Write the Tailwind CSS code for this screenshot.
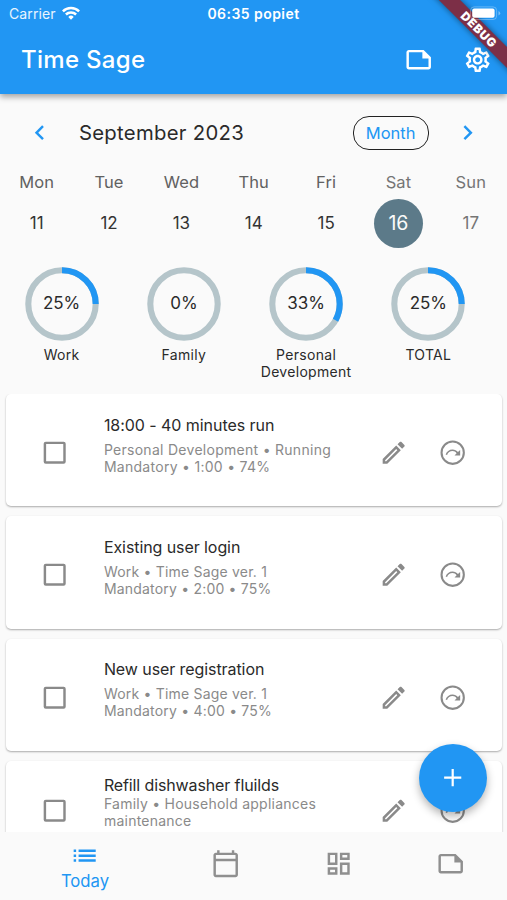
<!DOCTYPE html>
<html lang="en">
<head>
<meta charset="utf-8">
<title>Time Sage</title>
<script src="https://cdn.jsdelivr.net/npm/@tailwindcss/browser@4"></script>
</head>
<body class="bg-[#fafafa]">
<svg class="hidden">
  <symbol id="note" viewBox="0 0 24 24"><path d="M16 4H4c-1.1 0-2 .9-2 2v12.01c0 1.1.9 1.99 2 1.99h16c1.1 0 2-.9 2-2v-8l-6-6zM4 18.01V6h11v5h5v7.01H4z"/></symbol>
  <symbol id="gear" viewBox="0 0 24 24"><path d="M19.43 12.98c.04-.32.07-.64.07-.98 0-.34-.03-.66-.07-.98l2.11-1.65c.19-.15.24-.42.12-.64l-2-3.46c-.09-.16-.26-.25-.44-.25-.06 0-.12.01-.17.03l-2.49 1c-.52-.4-1.08-.73-1.69-.98l-.38-2.65C14.46 2.18 14.25 2 14 2h-4c-.25 0-.46.18-.49.42l-.38 2.65c-.61.25-1.17.59-1.69.98l-2.49-1c-.06-.02-.12-.03-.18-.03-.17 0-.34.09-.43.25l-2 3.46c-.13.22-.07.49.12.64l2.11 1.65c-.04.32-.07.65-.07.98 0 .33.03.66.07.98l-2.11 1.65c-.19.15-.24.42-.12.64l2 3.46c.09.16.26.25.44.25.06 0 .12-.01.17-.03l2.49-1c.52.4 1.08.73 1.69.98l.38 2.65c.03.24.24.42.49.42h4c.25 0 .46-.18.49-.42l.38-2.65c.61-.25 1.17-.59 1.69-.98l2.49 1c.06.02.12.03.18.03.17 0 .34-.09.43-.25l2-3.46c.12-.22.07-.49-.12-.64l-2.11-1.65zm-1.98-1.71c.04.31.05.52.05.73 0 .21-.02.43-.05.73l-.14 1.13.89.7 1.08.84-.7 1.21-1.27-.51-1.04-.42-.9.68c-.43.32-.84.56-1.25.73l-1.06.43-.16 1.13-.2 1.35h-1.4l-.19-1.35-.16-1.13-1.06-.43c-.43-.18-.83-.41-1.23-.71l-.91-.7-1.06.43-1.27.51-.7-1.21 1.08-.84.89-.7-.14-1.13c-.03-.31-.05-.54-.05-.74s.02-.43.05-.73l.14-1.13-.89-.7-1.08-.84.7-1.21 1.27.51 1.04.42.9-.68c.43-.32.84-.56 1.25-.73l1.06-.43.16-1.13.2-1.35h1.39l.19 1.35.16 1.13 1.06.43c.43.18.83.41 1.23.71l.91.7 1.06-.43 1.27-.51.7 1.21-1.07.85-.89.7.14 1.13zM12 8c-2.21 0-4 1.79-4 4s1.79 4 4 4 4-1.79 4-4-1.79-4-4-4zm0 6c-1.1 0-2-.9-2-2s.9-2 2-2 2 .9 2 2-.9 2-2 2z"/></symbol>
  <symbol id="pencil" viewBox="0 0 24 24"><path d="M14.06 9.02l.92.92L5.92 19H5v-.92l9.06-9.06M17.66 3c-.25 0-.51.1-.7.29l-1.83 1.83 3.75 3.75 1.83-1.83c.39-.39.39-1.02 0-1.41l-2.34-2.34c-.2-.2-.45-.29-.71-.29zm-3.6 3.19L3 17.25V21h3.75L17.81 9.94l-3.75-3.75z"/></symbol>
  <symbol id="box" viewBox="0 0 24 24"><rect x="4" y="4" width="16" height="16" rx=".7" fill="none" stroke="currentColor" stroke-width="2"/></symbol>
  <symbol id="next" viewBox="0 0 24 24"><circle cx="12" cy="12" r="9.1" fill="none" stroke="currentColor" stroke-width="1.7"/><path d="M18.100 9.800v4.400h-4.600l1.700-1.700C14.400 11.300 13.200 10.600 11.900 10.600c-2.100 0-3.800 1.300-4.500 3.300L6.200 13.500c.8-2.500 3-4.200 5.700-4.200 1.800 0 3.300.8 4.400 2.200z"/></symbol>
  <symbol id="calendar" viewBox="0 0 24 24"><path d="M20 3h-1V1h-2v2H7V1H5v2H4c-1.1 0-2 .9-2 2v16c0 1.1.9 2 2 2h16c1.1 0 2-.9 2-2V5c0-1.1-.9-2-2-2zm0 18H4V10h16v11zm0-13H4V5h16v3z"/></symbol>
  <symbol id="dashboard" viewBox="0 0 24 24"><path d="M19 5v2h-4V5h4M9 5v6H5V5h4m10 8v6h-4v-6h4M9 17v2H5v-2h4M21 3h-8v6h8V3zM11 3H3v10h8V3zm10 8h-8v10h8V11zm-10 4H3v6h8v-6z"/></symbol>
  <symbol id="list" viewBox="0 0 24 24"><path d="M3 13h2v-2H3v2zm0 4h2v-2H3v2zm0-8h2V7H3v2zm4 4h14v-2H7v2zm0 4h14v-2H7v2zM7 7v2h14V7H7z"/></symbol>
</svg>
<div class="relative flex h-[900px] w-[507px] flex-col overflow-hidden bg-[#fafafa] font-['Inter',sans-serif] text-[#2a2a2a]">

  <header class="relative z-10 flex h-[94px] shrink-0 flex-col bg-[#2196f3] text-white shadow-[0_3px_6px_rgba(0,0,0,0.35)]">
    <div class="grid h-[27px] grid-cols-3 items-center px-[9px]">
      <div class="flex items-center gap-[6px] text-white/90">
        <span class="text-[14px] tracking-[0.1px]">Carrier</span>
        <svg class="mb-[2px] h-[14px] w-[18px]" viewBox="0 0 18 14" fill="none" stroke="white" stroke-width="2.5"><path d="M.9 5.4a11.6 11.6 0 0 1 16.2 0M3.9 8.5a7.3 7.3 0 0 1 10.2 0"/><path d="M9 13.7l-2.7-2.8a3.9 3.9 0 0 1 5.4 0z" fill="white" stroke="none"/></svg>
      </div>
      <span class="text-center text-[14px] font-semibold whitespace-nowrap tracking-[0.45px]">06:35 popiet</span>
    </div>
    <div class="flex h-[65px] items-center pr-[15px] pl-[21px]">
      <h1 class="flex-1 text-[24px] font-[450] tracking-[0.3px]">Time Sage</h1>
      <svg class="mr-[29px] size-[29.4px]" fill="currentColor"><use href="#note"/></svg>
      <svg class="size-[29.4px]" fill="currentColor"><use href="#gear"/></svg>
    </div>
    <div class="absolute top-0 right-0 h-[80px] w-[80px] overflow-hidden">
      <div class="absolute top-[22px] left-[-8.500px] flex h-[15px] w-[120px] rotate-45 items-center justify-center bg-[#7c2f47] text-[12px] font-black tracking-[0.7px] shadow-[0_0_6px_rgba(0,0,0,0.5)]">DEBUG</div>
    </div>
    <svg class="absolute top-[6px] right-[6px] h-[15px] w-[31px]" viewBox="0 0 31 15"><rect x=".6" y=".9" width="26" height="12.6" rx="3.5" fill="none" stroke="white" stroke-opacity=".3"/><rect x="2.2" y="2.600" width="22.4" height="9.200" rx="2" fill="white"/><path d="M28.5 5v4.600q1.700-.8 1.700-2.300t-1.700-2.300z" fill="white" fill-opacity=".4"/></svg>
  </header>

  <section class="shrink-0">
    <div class="mt-[22px] flex h-[34px] items-center pr-[25px] pl-[24.800px]">
      <svg class="size-[29.4px] text-[#2196f3]" viewBox="0 0 24 24" fill="currentColor"><path d="M15.410 7.410L14 6l-6 6 6 6 1.410-1.410L10.830 12z"/></svg>
      <h2 class="ml-[24.700px] flex-1 text-[20.300px] tracking-[0.3px]">September 2023</h2>
      <button class="mr-[24px] flex h-[33.500px] w-[76px] items-center justify-center rounded-[16px] border-[1.500px] border-[#222] pt-[1px] text-[16.500px] text-[#2196f3]">Month</button>
      <svg class="size-[29.4px] text-[#2196f3]" viewBox="0 0 24 24" fill="currentColor"><path d="M8.590 16.590L13.170 12 8.590 7.410 10 6l6 6-6 6z"/></svg>
    </div>
    <div class="mt-[20px] grid h-[24px] grid-cols-7 items-center pl-[0.500px] text-center text-[16.500px] tracking-[0.1px] text-[#616161]">
      <span>Mon</span><span>Tue</span><span>Wed</span><span>Thu</span><span>Fri</span><span class="text-[#757575]">Sat</span><span class="text-[#757575]">Sun</span>
    </div>
    <div class="mt-[4px] grid h-[50px] grid-cols-7 items-center pl-[0.500px] text-center text-[17px] text-[#333]">
      <span class="pt-[2px]">11</span><span class="pt-[2px]">12</span><span class="pt-[2px]">13</span><span class="pt-[2px]">14</span><span class="pt-[2px]">15</span>
      <span class="flex size-[49px] items-center justify-center justify-self-center rounded-full bg-[#5c7a89] pt-[2px] text-[19.500px] text-[#fafafa]">16</span>
      <span class="pt-[2px] text-[#757575]">17</span>
    </div>
  </section>

  <section class="mt-[18.500px] ml-[0.500px] grid h-[127.500px] w-[489px] shrink-0 grid-cols-4 text-center">
    <div class="flex flex-col items-center">
      <div class="grid size-[74px] place-items-center *:col-start-1 *:row-start-1">
        <svg class="size-[74px] -rotate-90" viewBox="0 0 74 74" fill="none" stroke-width="6.100"><circle cx="37" cy="37" r="33.700" stroke="#b5c5ca"/><circle cx="37" cy="37" r="33.700" stroke="#2196f3" pathLength="100" stroke-dasharray="25 75"/></svg>
        <span class="pt-[1px] text-[17px]">25%</span>
      </div>
      <span class="mt-[5px] text-[14px] leading-[17px] tracking-[0.3px]">Work</span>
    </div>
    <div class="flex flex-col items-center">
      <div class="grid size-[74px] place-items-center *:col-start-1 *:row-start-1">
        <svg class="size-[74px] -rotate-90" viewBox="0 0 74 74" fill="none" stroke-width="6.100"><circle cx="37" cy="37" r="33.700" stroke="#b5c5ca"/></svg>
        <span class="pt-[1px] text-[17px]">0%</span>
      </div>
      <span class="mt-[5px] text-[14px] leading-[17px] tracking-[0.3px]">Family</span>
    </div>
    <div class="flex flex-col items-center">
      <div class="grid size-[74px] place-items-center *:col-start-1 *:row-start-1">
        <svg class="size-[74px] -rotate-90" viewBox="0 0 74 74" fill="none" stroke-width="6.100"><circle cx="37" cy="37" r="33.700" stroke="#b5c5ca"/><circle cx="37" cy="37" r="33.700" stroke="#2196f3" pathLength="100" stroke-dasharray="33 67"/></svg>
        <span class="pt-[1px] text-[17px]">33%</span>
      </div>
      <span class="mt-[5px] text-[14px] leading-[17px] tracking-[0.3px]">Personal<br>Development</span>
    </div>
    <div class="flex flex-col items-center">
      <div class="grid size-[74px] place-items-center *:col-start-1 *:row-start-1">
        <svg class="size-[74px] -rotate-90" viewBox="0 0 74 74" fill="none" stroke-width="6.100"><circle cx="37" cy="37" r="33.700" stroke="#b5c5ca"/><circle cx="37" cy="37" r="33.700" stroke="#2196f3" pathLength="100" stroke-dasharray="25 75"/></svg>
        <span class="pt-[1px] text-[17px]">25%</span>
      </div>
      <span class="mt-[5px] text-[14px] leading-[17px] tracking-[0.3px]">TOTAL</span>
    </div>
  </section>

  <main class="flex min-h-0 flex-1 flex-col gap-[10px] overflow-hidden pr-[5px] pl-[6px]">
    <article class="flex h-[112.300px] shrink-0 items-center rounded-[5px] bg-white pt-[5px] pr-[34.800px] pl-[34px] shadow-[0_1px_2px_rgba(0,0,0,0.32)]">
      <svg class="size-[29.400px] text-[#8a8a8a]" fill="currentColor"><use href="#box"/></svg>
      <div class="ml-[34.500px] flex-1 pb-[15px]">
        <h3 class="text-[16px] leading-[20px] tracking-[-0.05px] whitespace-nowrap">18:00 - 40 minutes run</h3>
        <p class="mt-[6px] text-[14px] leading-[17px] tracking-[0.28px] whitespace-nowrap text-[#8a8a8a]">Personal Development • Running<br>Mandatory • 1:00 • 74%</p>
      </div>
      <svg class="mr-[29.400px] size-[29.400px] text-[#8a8a8a]" fill="currentColor"><use href="#pencil"/></svg>
      <svg class="size-[29.400px] text-[#8a8a8a]" fill="currentColor"><use href="#next"/></svg>
    </article>
    <article class="flex h-[112.300px] shrink-0 items-center rounded-[5px] bg-white pt-[5px] pr-[34.800px] pl-[34px] shadow-[0_1px_2px_rgba(0,0,0,0.32)]">
      <svg class="size-[29.400px] text-[#8a8a8a]" fill="currentColor"><use href="#box"/></svg>
      <div class="ml-[34.500px] flex-1 pb-[15px]">
        <h3 class="text-[16px] leading-[20px] tracking-[-0.08px] whitespace-nowrap">Existing user login</h3>
        <p class="mt-[6px] text-[14px] leading-[17px] tracking-[0.2px] whitespace-nowrap text-[#8a8a8a]">Work • Time Sage ver. 1<br>Mandatory • 2:00 • 75%</p>
      </div>
      <svg class="mr-[29.400px] size-[29.400px] text-[#8a8a8a]" fill="currentColor"><use href="#pencil"/></svg>
      <svg class="size-[29.400px] text-[#8a8a8a]" fill="currentColor"><use href="#next"/></svg>
    </article>
    <article class="flex h-[112.300px] shrink-0 items-center rounded-[5px] bg-white pt-[5px] pr-[34.800px] pl-[34px] shadow-[0_1px_2px_rgba(0,0,0,0.32)]">
      <svg class="size-[29.400px] text-[#8a8a8a]" fill="currentColor"><use href="#box"/></svg>
      <div class="ml-[34.500px] flex-1 pb-[16px]">
        <h3 class="text-[16px] leading-[20px] tracking-[-0.08px] whitespace-nowrap">New user registration</h3>
        <p class="mt-[6px] text-[14px] leading-[17px] tracking-[0.2px] whitespace-nowrap text-[#8a8a8a]">Work • Time Sage ver. 1<br>Mandatory • 4:00 • 75%</p>
      </div>
      <svg class="mr-[29.400px] size-[29.400px] text-[#8a8a8a]" fill="currentColor"><use href="#pencil"/></svg>
      <svg class="size-[29.400px] text-[#8a8a8a]" fill="currentColor"><use href="#next"/></svg>
    </article>
    <article class="flex h-[100px] shrink-0 items-center rounded-[5px] bg-white pr-[34.800px] pl-[34px] shadow-[0_1px_2px_rgba(0,0,0,0.32)]">
      <svg class="size-[29.400px] text-[#8a8a8a]" fill="currentColor"><use href="#box"/></svg>
      <div class="ml-[34.500px] flex-1 pb-[18.500px]">
        <h3 class="text-[16px] leading-[20px] tracking-[-0.12px] whitespace-nowrap">Refill dishwasher fluilds</h3>
        <p class="text-[14px] leading-[17px] tracking-[0.24px] whitespace-nowrap text-[#8a8a8a]">Family • Household appliances<br>maintenance</p>
      </div>
      <svg class="mr-[29.400px] size-[29.400px] text-[#8a8a8a]" fill="currentColor"><use href="#pencil"/></svg>
      <svg class="size-[29.400px] text-[#8a8a8a]" fill="currentColor"><use href="#next"/></svg>
    </article>
  </main>

  <nav class="flex h-[68px] shrink-0 bg-[#fafafa] pl-[55px] text-[#8f8f8f]">
    <a class="mr-[96.300px] flex w-[60px] flex-col items-center pt-[9px] text-[#2196f3]">
      <svg class="size-[29.400px]" fill="currentColor"><use href="#list"/></svg>
      <span class="pt-[1px] text-[16.700px] leading-[20px]">Today</span>
    </a>
    <a class="mr-[83px] pt-[17px]"><svg class="size-[29.400px]" fill="currentColor"><use href="#calendar"/></svg></a>
    <a class="mr-[83px] pt-[17px]"><svg class="size-[29.400px]" fill="currentColor"><use href="#dashboard"/></svg></a>
    <a class="pt-[17px]"><svg class="size-[29.400px]" fill="currentColor"><use href="#note"/></svg></a>
  </nav>

  <button class="absolute top-[743.500px] left-[418.700px] flex size-[68.500px] items-center justify-center rounded-full bg-[#2196f3] text-white shadow-[0_4px_8px_rgba(0,0,0,0.3)]">
    <svg class="size-[29.400px]" viewBox="0 0 24 24" fill="currentColor"><path d="M19 12.900h-6.100V19h-1.800v-6.100H5v-1.800h6.100V5h1.800v6.100H19z"/></svg>
  </button>
</div>
</body>
</html>
